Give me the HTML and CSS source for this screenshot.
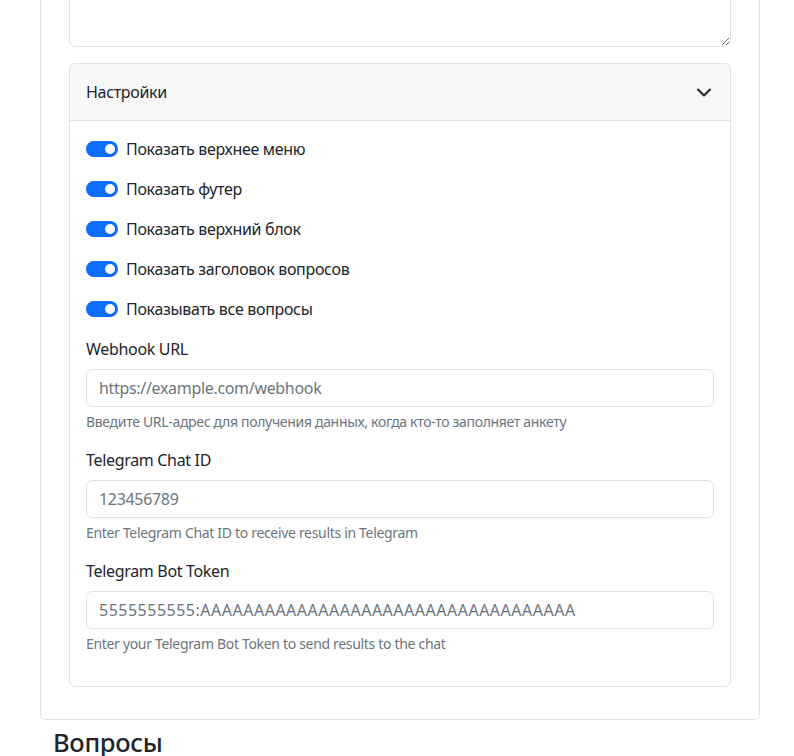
FILE: index.html
```html
<!DOCTYPE html>
<html lang="ru">
<head>
<meta charset="utf-8">
<link rel="stylesheet" href="styles.css">
</head>
<body>
<div class="page">
  <div class="card">
    <textarea class="area"></textarea>
    <div class="panel">
      <div class="panel-head">
        <span>Настройки</span>
        <svg class="chev" width="14" height="9" viewBox="0 0 14 9"><path d="M1 1.5 L7 7.5 L13 1.5" fill="none" stroke="#212529" stroke-width="2" stroke-linecap="round" stroke-linejoin="round"/></svg>
      </div>
      <div class="panel-body">
        <label class="check"><span class="switch"></span>Показать верхнее меню</label>
        <label class="check"><span class="switch"></span>Показать футер</label>
        <label class="check"><span class="switch"></span>Показать верхний блок</label>
        <label class="check"><span class="switch"></span>Показать заголовок вопросов</label>
        <label class="check"><span class="switch"></span>Показывать все вопросы</label>

        <div class="field">
          <label class="lbl">Webhook URL</label>
          <input class="input" type="text" placeholder="https://example.com/webhook">
          <div class="help">Введите URL-адрес для получения данных, когда кто-то заполняет анкету</div>
        </div>
        <div class="field">
          <label class="lbl">Telegram Chat ID</label>
          <input class="input" type="text" placeholder="123456789">
          <div class="help">Enter Telegram Chat ID to receive results in Telegram</div>
        </div>
        <div class="field">
          <label class="lbl">Telegram Bot Token</label>
          <input class="input token" type="text" placeholder="5555555555:AAAAAAAAAAAAAAAAAAAAAAAAAAAAAAAAAAA">
          <div class="help">Enter your Telegram Bot Token to send results to the chat</div>
        </div>
      </div>
    </div>
  </div>
  <h3 class="title">Вопросы</h3>
</div>
</body>
</html>
```
FILE: styles.css
```css
* { box-sizing: border-box; }
html, body { margin: 0; padding: 0; background: #fff; }
body {
  font-family: "Noto Sans", "Open Sans", sans-serif;
  font-size: 16px;
  line-height: 1.5;
  letter-spacing: -0.02em;
  color: #212529;
  overflow: hidden;
}
.page {
  width: 720px;
  margin: -73px 0 0 40px;
}
.card {
  border: 1px solid #dee2e6;
  border-radius: 6px;
  padding: 28px 28px 32px;
}
.area {
  display: block;
  width: 100%;
  height: 91px;
  border: 1px solid #dee2e6;
  border-radius: 6px;
  margin: 0 0 16px;
  resize: vertical;
  font: inherit;
}
.panel {
  border: 1px solid #dee2e6;
  border-radius: 6px;
  overflow: hidden;
}
.panel-head {
  display: flex;
  align-items: center;
  justify-content: space-between;
  background: #f7f7f7;
  border-bottom: 1px solid #dee2e6;
  padding: 16px 19px 16px 16px;
  height: 57px;
}
.chev { display: block; margin-top: 1px; }
.panel-body {
  padding: 16px;
}
.check {
  display: flex;
  align-items: center;
  height: 24px;
  margin-bottom: 16px;
}
.switch {
  position: relative;
  width: 32px;
  height: 16px;
  border-radius: 8px;
  background: #0d6efd;
  margin-right: 8px;
  flex: none;
}
.switch::after {
  content: "";
  position: absolute;
  right: 3px;
  top: 3px;
  width: 10px;
  height: 10px;
  border-radius: 50%;
  background: #fff;
}
.field { margin-bottom: 16px; }
.lbl {
  display: block;
  margin-bottom: 8px;
}
.input {
  display: block;
  width: 100%;
  height: 38px;
  padding: 6px 12px;
  border: 1px solid #dee2e6;
  border-radius: 6px;
  font: inherit;
  letter-spacing: -0.02em;
  color: #212529;
  background: #fff;
}
.input::placeholder { color: #6c757d; opacity: 1; }
.token { letter-spacing: 0.5px; }
.help {
  margin-top: 4px;
  font-size: 14px;
  line-height: 21px;
  color: #6c757d;
}
.title {
  margin: 7px 0 0 13px;
  font-size: 25.5px;
  font-weight: 500;
  line-height: 1.2;
}
```
